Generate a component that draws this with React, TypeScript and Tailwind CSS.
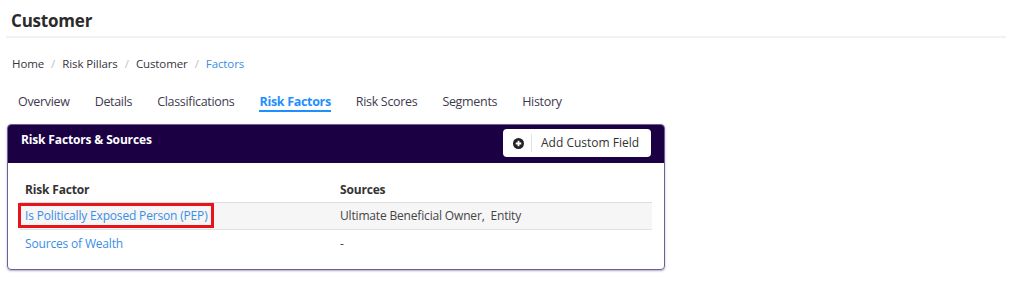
import React from 'react';

const tabs = ['Overview', 'Details', 'Classifications', 'Risk Factors', 'Risk Scores', 'Segments', 'History'];

const rows = [
  { factor: 'Is Politically Exposed Person (PEP)', sources: 'Ultimate Beneficial Owner,  Entity', marked: true },
  { factor: 'Sources of Wealth', sources: '-', marked: false },
];

export default function App() {
  return (
    <div className="w-[1024px] h-[295px] bg-white text-[#333] font-['Open_Sans',sans-serif] overflow-hidden">
      <div className="px-[6px]">
        <div className="h-[38px] border-b-2 border-[#f2f2f2] flex items-center px-[5px] mr-[12px]">
          <h1 className="text-[17px] font-bold text-[#2b2b2b] tracking-[-0.2px] mt-[5px]">Customer</h1>
        </div>

        <nav className="flex items-center gap-[7px] text-[11.5px] text-[#3a3340] tracking-[-0.1px] pl-[6px] mt-[18px] h-[16px]">
          <span>Home</span>
          <span className="text-[#c0c0c0]">/</span>
          <span>Risk Pillars</span>
          <span className="text-[#c0c0c0]">/</span>
          <span>Customer</span>
          <span className="text-[#c0c0c0]">/</span>
          <span className="text-[#3a8ee6]">Factors</span>
        </nav>

        <div className="flex items-center gap-[25px] pl-[12px] mt-[20px] h-[20px] text-[12.5px] tracking-[-0.32px] text-[#3f3a4f]">
          {tabs.map(t =>
            t === 'Risk Factors' ? (
              <span key={t} className="font-bold text-[#1e8fff] border-b-2 border-[#1e8fff] leading-[16px] pt-[2px]">{t}</span>
            ) : (
              <span key={t}>{t}</span>
            )
          )}
        </div>

        <div className="mt-[12px] ml-[1px] w-[658px] rounded-[4px] border border-[#6e5e98] shadow-[0_1px_2px_rgba(60,40,100,0.4)] overflow-hidden">
          <div className="h-[38px] bg-[#1b0044] flex items-start justify-between pl-[13px] pr-[13px]">
            <span className="text-white font-bold text-[12px] tracking-[-0.15px] mt-[6px]">Risk Factors &amp; Sources</span>
            <button className="mt-[4px] h-[28px] w-[148px] bg-white rounded-[4px] flex items-center text-[12px] text-[#333]">
              <span className="w-[28px] flex justify-center pl-[3px]">
                <svg width="11" height="11" viewBox="0 0 16 16">
                  <circle cx="8" cy="8" r="8" fill="#222" />
                  <path d="M8 4v8M4 8h8" stroke="#fff" strokeWidth="2.6" />
                </svg>
              </span>
              <span className="w-px h-[18px] bg-[#e3e3e3]" />
              <span className="pl-[9px]">Add Custom Field</span>
            </button>
          </div>

          <div className="px-[12px] pt-[18px] pb-[12px] tracking-[-0.17px]">
            <div className="grid grid-cols-[320px_1fr] h-[22px] border-b border-[#dedede] text-[12px] font-bold text-[#333]">
              <span className="pl-[5px]">Risk Factor</span>
              <span>Sources</span>
            </div>
            {rows.map((r, i) => (
              <div
                key={r.factor}
                className={`grid grid-cols-[320px_1fr] h-[27px] items-center text-[12px] ${i === 0 ? 'bg-[#f6f6f6] border-b border-[#e2e2e2]' : ''}`}
              >
                <span className="pl-[5px]">
                  <a className={`text-[#3a8ee6] ${r.marked ? 'outline-[3px] outline outline-[#e8141c] outline-offset-[1px] -ml-[3px] pl-[3px] pr-[2px]' : ''}`}>
                    {r.factor}
                  </a>
                </span>
                <span className="text-[#444] whitespace-pre">{r.sources}</span>
              </div>
            ))}
          </div>
        </div>
      </div>
    </div>
  );
}
